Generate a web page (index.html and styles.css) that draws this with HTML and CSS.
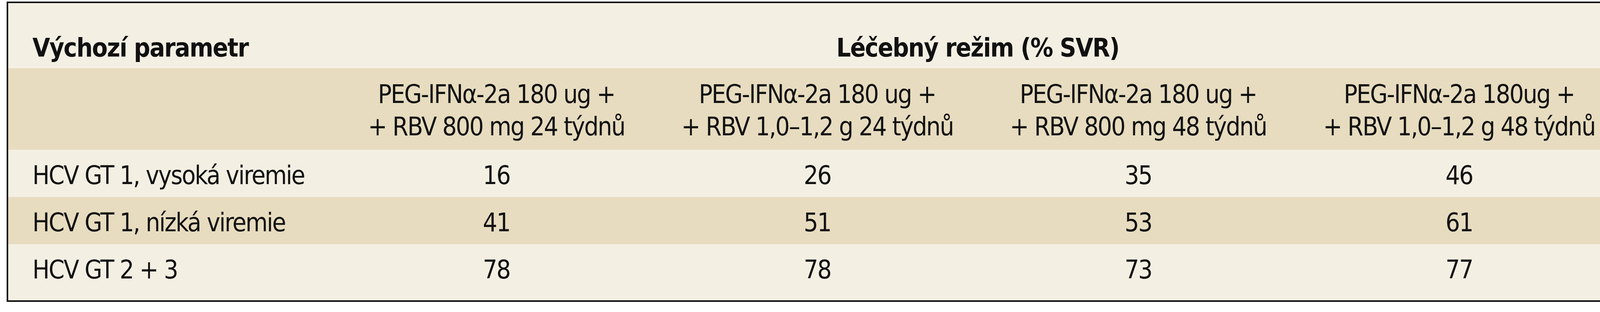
FILE: index.html
```html
<!DOCTYPE html>
<html lang="cs">
<head>
<meta charset="utf-8">
<title>Léčebný režim</title>
<link rel="stylesheet" href="styles.css">
</head>
<body>
<div class="table">
  <div class="row head-top">
    <div class="cell first bold">Výchozí parametr</div>
    <div class="cell span bold">Léčebný režim (% SVR)</div>
  </div>
  <div class="row head-sub shaded">
    <div class="cell first"></div>
    <div class="cell">PEG-IFNα-2a 180 ug +<br>+ RBV 800 mg 24 týdnů</div>
    <div class="cell">PEG-IFNα-2a 180 ug +<br>+ RBV 1,0–1,2 g 24 týdnů</div>
    <div class="cell">PEG-IFNα-2a 180 ug +<br>+ RBV 800 mg 48 týdnů</div>
    <div class="cell">PEG-IFNα-2a 180ug +<br>+ RBV 1,0–1,2 g 48 týdnů</div>
  </div>
  <div class="row data">
    <div class="cell first">HCV GT 1, vysoká viremie</div>
    <div class="cell">16</div>
    <div class="cell">26</div>
    <div class="cell">35</div>
    <div class="cell">46</div>
  </div>
  <div class="row data shaded">
    <div class="cell first">HCV GT 1, nízká viremie</div>
    <div class="cell">41</div>
    <div class="cell">51</div>
    <div class="cell">53</div>
    <div class="cell">61</div>
  </div>
  <div class="row data">
    <div class="cell first">HCV GT 2 + 3</div>
    <div class="cell">78</div>
    <div class="cell">78</div>
    <div class="cell">73</div>
    <div class="cell">77</div>
  </div>
</div>
</body>
</html>
```
FILE: styles.css
```css
html, body {
  margin: 0;
  padding: 0;
  background: #ffffff;
}

body {
  font-family: "DejaVu Sans Condensed", "DejaVu Sans", sans-serif;
  font-stretch: condensed;
  font-size: 65px;
  line-height: 83px;
  color: #111111;
  letter-spacing: -2.5px;
}

.table {
  box-sizing: border-box;
  width: 4133px;
  margin: 4px 0 0 17px;
  border: 4px solid #0d0d0d;
  background: #f4efe3;
  padding-bottom: 23px;
}

.row {
  display: grid;
  grid-template-columns: 839px repeat(4, 1fr);
}

.shaded {
  background: #e7dcbf;
}

.cell {
  text-align: center;
  white-space: nowrap;
}

.cell.first {
  text-align: left;
  padding-left: 62px;
}

.cell.span {
  grid-column: 2 / 6;
}

.bold {
  font-weight: bold;
  letter-spacing: -1.8px;
}

.head-top {
  padding: 73px 0 11px;
}

.head-sub {
  padding: 25px 0 18px;
}

.data {
  padding: 24px 0 14px;
}
```
